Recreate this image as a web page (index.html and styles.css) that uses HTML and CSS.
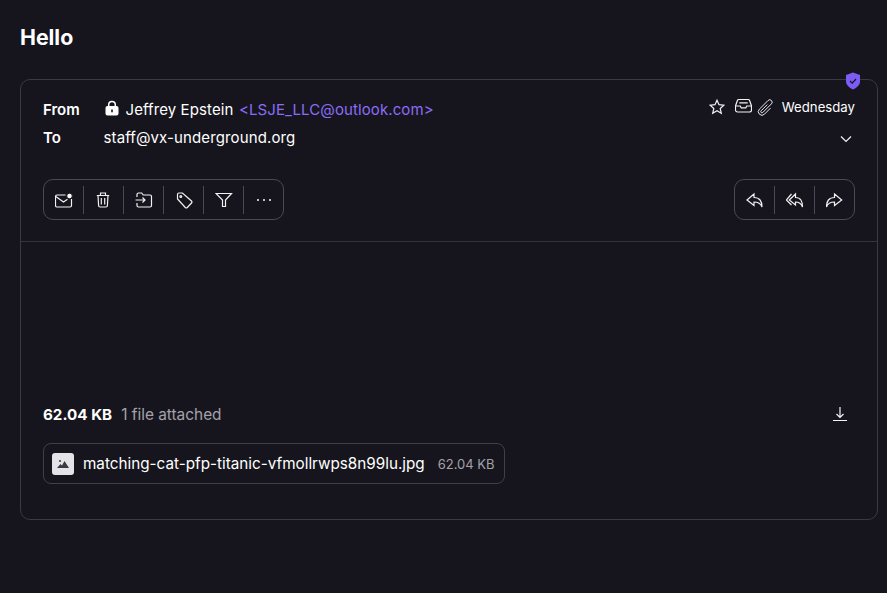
FILE: index.html
```html
<!DOCTYPE html>
<html lang="en">
<head>
  <meta charset="UTF-8">
  <title>Hello</title>
  <link rel="stylesheet" href="styles.css">
</head>
<body>
  <h1 class="subject">Hello</h1>

  <article class="card">
    <svg class="shield" width="16" height="18" viewBox="0 0 16 18">
      <path d="M8 .6 15 3v6.200c0 3.800-3 6.400-7 8.200-4-1.800-7-4.400-7-8.200V3z" fill="#7c5cf5"/>
      <path d="M5 9l2.200 2.100L11 7" fill="none" stroke="#16151d" stroke-width="1.300"/>
    </svg>

    <header class="meta">
      <div class="people">
        <div class="row">
          <span class="label">From</span>
          <span class="sender">
            <svg class="lock" width="16" height="16" viewBox="0 0 16 16">
              <path d="M4.700 7V4.800a3.300 3.300 0 0 1 6.600 0V7" fill="none" stroke="#fff" stroke-width="1.500"/>
              <rect x="1.500" y="6" width="13" height="9.500" rx="2" fill="#fff"/>
              <rect x="7.200" y="9.500" width="1.600" height="2.800" fill="#16151d"/>
            </svg>
            Jeffrey Epstein <span class="address">&lt;LSJE_LLC@outlook.com&gt;</span>
          </span>
        </div>
        <div class="row">
          <span class="label">To</span>
          <span class="recipient">staff@vx-underground.org</span>
        </div>
      </div>
      <div class="status">
        <div class="status-top">
          <svg class="icon" width="16" height="16" viewBox="0 0 16 16"><path d="M8 1.200l2 4.500 4.900.5-3.700 3.300 1.100 4.800L8 11.800l-4.300 2.500 1.100-4.800L1.100 6.200 6 5.700z"/></svg>
          <svg class="icon inbox" width="17" height="16" viewBox="0 0 17 16"><path d="M3.800 1.500h9.400a1.500 1.500 0 0 1 1.400 1l1.900 5.500v4a2 2 0 0 1-2 2h-12a2 2 0 0 1-2-2V8l1.900-5.500a1.500 1.500 0 0 1 1.400-1z"/><path d="M1 8h4.200l1 1.800h4.600l1-1.800H16M4.300 4.800h8.400"/></svg>
          <svg class="icon clip" width="19" height="19" viewBox="0 0 24 24" stroke-width="1.500"><path d="M18.375 12.739l-7.693 7.693a4.500 4.500 0 01-6.364-6.364l10.940-10.940A3 3 0 1119.500 7.372L8.552 18.320m.009-.01l-.01.01m5.699-9.941l-7.810 7.810a1.500 1.500 0 002.112 2.130"/></svg>
          <span class="date">Wednesday</span>
        </div>
        <svg class="icon chevron" width="12" height="8" viewBox="0 0 12 8"><path d="M1 1.500l5 5 5-5"/></svg>
      </div>
    </header>

    <div class="toolbars">
      <div class="toolbar">
        <button class="tool">
          <svg class="icon" width="18" height="18" viewBox="0 0 18 18"><path d="M10.500 4H2A1.500 1.500 0 0 0 .5 5.500v9A1.500 1.500 0 0 0 2 16h13a1.500 1.500 0 0 0 1.500-1.500V8"/><path d="M.8 5.500 8.500 11l4-2.800"/><circle class="dot" cx="14.500" cy="5" r="2.800"/></svg>
        </button>
        <button class="tool">
          <svg class="icon" width="18" height="18" viewBox="0 0 18 18"><path d="M1.800 4.500h12.400M5.500 4.500V2h5v2.500M3 4.500l.6 10A1.500 1.500 0 0 0 5.100 16h5.800a1.500 1.500 0 0 0 1.500-1.500l.6-10M6.300 7v6.500M9.700 7v6.500"/></svg>
        </button>
        <button class="tool">
          <svg class="icon" width="18" height="18" viewBox="0 0 18 18"><path d="M2 6V3.500A1.500 1.500 0 0 1 3.500 2h3.200l1.500 2h6.800A1.500 1.500 0 0 1 16.500 5.500v9A1.500 1.500 0 0 1 15 16H3.500A1.500 1.500 0 0 1 2 14.500V12"/><path d="M.5 9H10M7.500 6.500 10 9l-2.500 2.500"/></svg>
        </button>
        <button class="tool">
          <svg class="icon" width="18" height="18" viewBox="0 0 18 18"><path d="M2.500 3.500A1.500 1.500 0 0 1 4 2h3.400l9.100 8a1.500 1.500 0 0 1 0 2l-4.200 4.500a1.500 1.500 0 0 1-2 0L2.500 8z"/><circle cx="5.800" cy="5.500" r=".9"/></svg>
        </button>
        <button class="tool">
          <svg class="icon" width="18" height="18" viewBox="0 0 18 18"><path d="M1 2.500h15.500l-6 6.500v6.500h-3V9z"/></svg>
        </button>
        <button class="tool">
          <svg width="18" height="18" viewBox="0 0 18 18" fill="#fff"><circle cx="3" cy="9" r="1"/><circle cx="9" cy="9" r="1"/><circle cx="15" cy="9" r="1"/></svg>
        </button>
      </div>

      <div class="toolbar">
        <button class="tool">
          <svg class="icon" width="18" height="18" viewBox="0 0 18 18"><path d="M8 3 1 9 8 14.500v-3.500c3.500 0 6.500 1 8 5 0-6-2.500-9.500-8-9.500z"/></svg>
        </button>
        <button class="tool">
          <svg class="icon" width="18" height="18" viewBox="0 0 18 18"><path d="M5.500 3 .3 9 5.500 14"/><path d="M9.500 3 3.300 9 9.500 14v-3c3.500 0 5.500 1 7 5 0-6-2-9.500-7-9.500z"/></svg>
        </button>
        <button class="tool">
          <svg class="icon" width="18" height="18" viewBox="0 0 18 18"><path d="M8.500 3l7.200 6-7.200 5.500v-3.500c-3.500 0-6.700 1-8 5 0-6 2.500-9.500 8-9.500z"/></svg>
        </button>
      </div>
    </div>

    <section class="attachments">
      <div class="attach-head">
        <span class="total">62.04 KB</span>
        <span class="count">1 file attached</span>
        <svg class="icon download" width="16" height="16" viewBox="0 0 16 16"><path d="M8 1v10.500M4.500 8 8 11.500 11.500 8M1 14.500h14"/></svg>
      </div>
      <div class="file">
        <span class="thumb">
          <svg width="12" height="10" viewBox="0 0 12 10" fill="#3a3944"><circle cx="3" cy="2" r="1"/><path d="M0 9l3.500-4 1.500 1.500L7.500 2 12 9z"/></svg>
        </span>
        <span class="file-name">matching-cat-pfp-titanic-vfmollrwps8n99lu.jpg</span>
        <span class="file-size">62.04 KB</span>
      </div>
    </section>
  </article>
</body>
</html>
```

FILE: styles.css
```css
* {
  margin: 0;
  padding: 0;
  box-sizing: border-box;
}

body {
  font-family: Inter, 'Liberation Sans', sans-serif;
  background: #16151d;
  color: #fff;
  padding: 24px 9px 0 20px;
  min-height: 100vh;
}

.subject {
  font-size: 21.300px;
  font-weight: 700;
  line-height: 27px;
  margin-bottom: 28px;
}

.card {
  position: relative;
  height: 441px;
  border: 1px solid #3a3944;
  border-radius: 10px;
  display: flex;
  flex-direction: column;
}

.shield {
  position: absolute;
  top: -8px;
  right: 16px;
}

.icon {
  fill: none;
  stroke: #f2f2f4;
  stroke-width: 1.200;
  flex: none;
}

.icon .dot {
  fill: #fff;
  stroke: #16151d;
  stroke-width: 1;
}

.meta {
  display: flex;
  justify-content: space-between;
  padding: 15px 22px 0;
}

.row {
  display: flex;
  align-items: center;
  height: 28px;
  font-size: 15px;
}

.label {
  width: 60.500px;
  font-weight: 600;
}

.sender {
  display: flex;
  align-items: center;
  gap: 5.500px;
  letter-spacing: .1px;
}

.lock {
  margin: -3px 0 0 .5px;
}

.address {
  color: #8b6cf7;
}

.recipient {
  letter-spacing: .12px;
}

.status {
  display: flex;
  flex-direction: column;
  align-items: flex-end;
}

.status-top {
  display: flex;
  align-items: center;
  height: 24px;
}

.inbox {
  margin: -3px 0 0 10px;
}

.clip {
  margin-left: 4px;
}

.date {
  font-size: 13.200px;
  margin-left: 7px;
}

.chevron {
  margin: 16px 3px 0 0;
}

.toolbars {
  display: flex;
  justify-content: space-between;
  padding: 28px 22px 21px;
  border-bottom: 1px solid #33323d;
}

.toolbar {
  display: flex;
  align-items: center;
  height: 41px;
  border: 1px solid #4a4954;
  border-radius: 10px;
}

.tool {
  width: 40px;
  height: 28px;
  display: flex;
  align-items: center;
  justify-content: center;
  background: none;
  border: none;
  border-left: 1px solid #4a4954;
}

.tool:first-child {
  width: 39px;
  border-left: none;
}

.attachments {
  margin-top: auto;
  padding: 0 22px 35px;
}

.attach-head {
  display: flex;
  align-items: center;
  gap: 9px;
  height: 20px;
  margin-bottom: 19px;
}

.total {
  font-size: 15.200px;
  font-weight: 700;
}

.count {
  font-size: 15.400px;
  color: #a3a2ab;
}

.download {
  margin-left: auto;
  margin-right: 7px;
}

.file {
  display: inline-flex;
  align-items: center;
  height: 41px;
  padding: 0 9px 0 8px;
  border: 1px solid #3f3e49;
  border-radius: 8px;
}

.thumb {
  width: 22px;
  height: 22px;
  margin-right: 9px;
  display: flex;
  align-items: center;
  justify-content: center;
  background: #e4e4e8;
  border-radius: 3px;
}

.file-name {
  font-size: 15.250px;
  margin-right: 13px;
}

.file-size {
  font-size: 13px;
  color: #a3a2ab;
}
```
